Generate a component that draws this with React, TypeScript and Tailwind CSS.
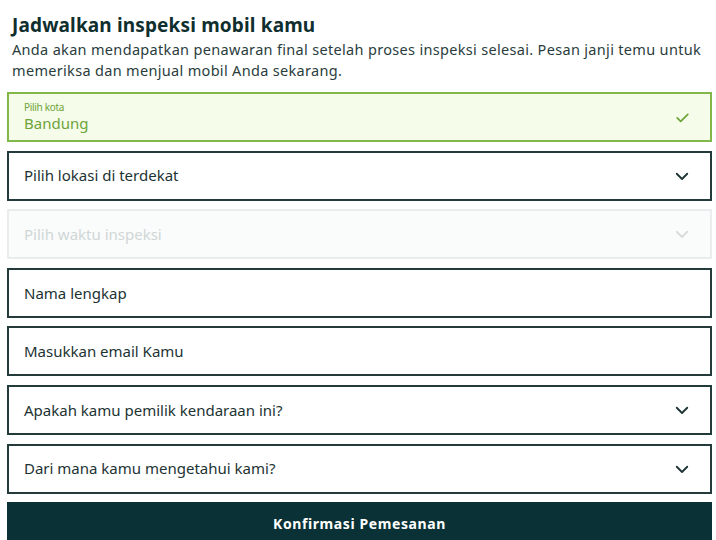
import React from 'react';

const Chevron = ({ className }: { className?: string }) => (
    <svg viewBox="0 0 24 24" className={className} fill="none" stroke="currentColor" strokeWidth={2.4} strokeLinecap="round" strokeLinejoin="round">
        <path d="M5 9l7 7 7-7" />
    </svg>
);

const Check = ({ className }: { className?: string }) => (
    <svg viewBox="0 0 24 24" className={className} fill="none" stroke="currentColor" strokeWidth={2.4} strokeLinecap="round" strokeLinejoin="round">
        <path d="M4.5 12.5l5 5 10-10" />
    </svg>
);

interface FieldProps {
    text: string;
    select?: boolean;
    disabled?: boolean;
}

const Field: React.FC<FieldProps> = ({ text, select, disabled }) => (
    <div
        className={`h-[50px] flex items-center justify-between pl-[15px] pr-[19px] border-2 ${
            disabled ? 'border-[#e9eded] bg-[#fafbfb]' : 'border-[#233b3b] bg-white'
        }`}
    >
        <span className={`text-[15px] ${disabled ? 'text-[#cfd7d7]' : 'text-[#1d3333]'}`}>{text}</span>
        {select && <Chevron className={`w-[18px] h-[18px] ${disabled ? 'text-[#d6dcdc]' : 'text-[#1d3333]'}`} />}
    </div>
);

export default function App() {
    return (
        <div className="w-[716px] h-[540px] overflow-hidden bg-white pl-[7px] pr-[4px] pt-[12px]" style={{ fontFamily: '"Noto Sans", Inter, sans-serif' }}>
            <h1 className="px-[5px] text-[19px] leading-[26px] font-bold text-[#0f2e2e] tracking-[0.15px]">Jadwalkan inspeksi mobil kamu</h1>
            <p className="px-[5px] mt-[1px] text-[14.5px] leading-[21px] text-[#2a3d3d] tracking-[0.32px]">
                Anda akan mendapatkan penawaran final setelah proses inspeksi selesai. Pesan janji temu untuk memeriksa dan menjual mobil Anda sekarang.
            </p>

            <div className="mt-[11px] flex flex-col gap-[8.6px]">
                <div className="h-[50px] flex items-center justify-between pl-[15px] pr-[19px] border-2 border-[#82b849] bg-[#f5fce9]">
                    <div className="flex flex-col">
                        <span className="text-[10px] leading-[12px] text-[#6ea43a] tracking-[-0.3px]">Pilih kota</span>
                        <span className="text-[15px] leading-[20px] text-[#6ea43a]">Bandung</span>
                    </div>
                    <Check className="w-[17px] h-[17px] text-[#6ea43a]" />
                </div>
                <Field text="Pilih lokasi di terdekat" select />
                <Field text="Pilih waktu inspeksi" select disabled />
                <Field text="Nama lengkap" />
                <Field text="Masukkan email Kamu" />
                <Field text="Apakah kamu pemilik kendaraan ini?" select />
                <Field text="Dari mana kamu mengetahui kami?" select />
                <button className="h-[42px] w-full bg-[#0a3236] text-white text-[14px] font-bold tracking-[0.6px]">Konfirmasi Pemesanan</button>
            </div>
        </div>
    );
}
